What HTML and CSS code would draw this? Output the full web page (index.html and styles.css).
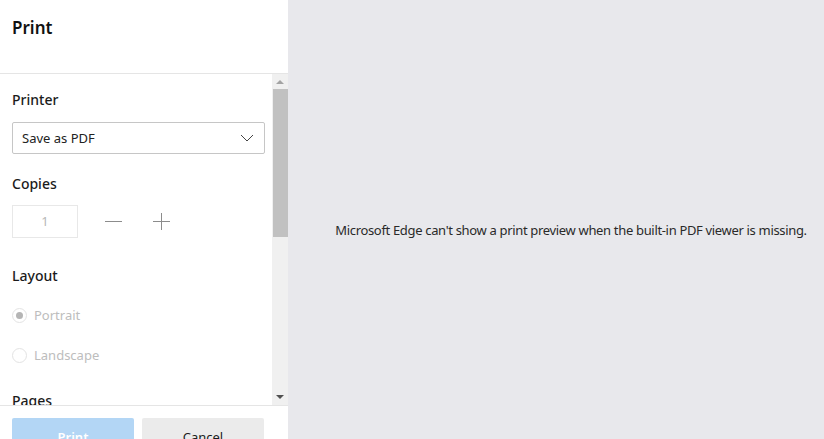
FILE: index.html
```html
<!DOCTYPE html>
<html lang="en">
<head>
    <meta charset="UTF-8">
    <title>Print</title>
    <link rel="stylesheet" href="styles.css">
</head>
<body>
<div class="app">
    <div class="side">
        <div class="head">Print</div>
        <div class="scrollBox">
            <div class="inner">
                <div class="label first">Printer</div>
                <div class="select">
                    <span>Save as PDF</span>
                    <svg width="14" height="8" viewBox="0 0 14 8"><path d="M1 1 L7 7 L13 1" fill="none" stroke="#444" stroke-width="1"/></svg>
                </div>
                <div class="label">Copies</div>
                <div class="copies">
                    <div class="num">1</div>
                    <span class="minus"></span>
                    <span class="plus"></span>
                </div>
                <div class="label layout">Layout</div>
                <div class="radio on"><i></i>Portrait</div>
                <div class="radio"><i></i>Landscape</div>
                <div class="label pages">Pages</div>
            </div>
            <div class="bar">
                <span class="up"></span>
                <span class="thumb"></span>
                <span class="down"></span>
            </div>
        </div>
        <div class="foot">
            <button class="btn print">Print</button>
            <button class="btn cancel">Cancel</button>
        </div>
    </div>
    <div class="preview">
        <p>Microsoft Edge can't show a print preview when the built-in PDF viewer is missing.</p>
    </div>
</div>
</body>
</html>
```

FILE: styles.css
```css
html,body{
    height: 100%;
    overflow: hidden;
}
*{
    margin:0;
    padding:0;
    box-sizing: border-box;
}
body{
    font-family: "Noto Sans", "Open Sans", sans-serif;
    font-size: 13px;
    color: #222;
}
.app{
    display: flex;
    height: 439px;
}
.side{
    width: 288px;
    display: flex;
    flex-direction: column;
    background: #fff;
    overflow: hidden;
}
.head{
    flex-shrink: 0;
    height: 74px;
    border-bottom: 1px solid #e5e5e5;
    padding: 16px 12px 0;
    font-size: 17px;
    font-weight: 600;
    line-height: 24px;
    color: #111;
}
.scrollBox{
    flex-shrink: 0;
    height: 331px;
    display: flex;
    overflow: hidden;
}
.inner{
    flex: 1;
    padding: 0 7px 0 12px;
}
.label{
    font-size: 14px;
    font-weight: 500;
    line-height: 20px;
    margin-top: 20px;
    color: #1b1b1b;
}
.label.first{
    margin-top: 16px;
}
.label.layout{
    margin-top: 28px;
}
.select{
    margin-top: 12px;
    height: 32px;
    width: 253px;
    border: 1px solid #c6c6c6;
    border-radius: 2px;
    display: flex;
    align-items: center;
    justify-content: space-between;
    padding: 0 10px 0 9px;
}
.copies{
    margin-top: 11px;
    display: flex;
    align-items: center;
    height: 33px;
}
.num{
    width: 66px;
    height: 33px;
    border: 1px solid #e8e8e8;
    color: #b8b8b8;
    text-align: center;
    line-height: 31px;
}
.minus,.plus{
    width: 17px;
    height: 17px;
    position: relative;
    margin-left: 27px;
}
.plus{
    margin-left: 31px;
}
.minus:before,.plus:before,.plus:after{
    content: "";
    position: absolute;
    background: #8c8c8c;
}
.minus:before,.plus:before{
    left: 0;
    top: 8px;
    width: 17px;
    height: 1px;
}
.plus:after{
    left: 8px;
    top: 0;
    width: 1px;
    height: 17px;
}
.label.pages{
    margin-top: 26px;
}
.radio{
    display: flex;
    align-items: center;
    height: 20px;
    margin-top: 19px;
    color: #bdbdbd;
}
.radio + .radio{
    margin-top: 20px;
}
.radio i{
    width: 15px;
    height: 15px;
    border: 1px solid #e3e3e3;
    border-radius: 50%;
    margin-right: 7px;
    position: relative;
}
.radio.on i:after{
    content: "";
    position: absolute;
    left: 3px;
    top: 3px;
    width: 7px;
    height: 7px;
    border-radius: 50%;
    background: #b5b5b5;
}
.bar{
    width: 17px;
    background: #f0f0f0;
    display: flex;
    flex-direction: column;
    align-items: center;
}
.up,.down{
    width: 0;
    height: 0;
    border-left: 4px solid transparent;
    border-right: 4px solid transparent;
    margin: 6px 0 5px;
}
.up{
    border-bottom: 4px solid #a3a3a3;
}
.thumb{
    width: 15px;
    height: 148px;
    background: #c1c1c1;
}
.down{
    margin-top: auto;
    margin-bottom: 6px;
    border-top: 4px solid #505050;
}
.foot{
    flex-shrink: 0;
    height: 60px;
    border-top: 1px solid #e5e5e5;
    padding: 12px 24px 0 12px;
    display: flex;
    gap: 8px;
}
.btn{
    width: 122px;
    height: 32px;
    border: none;
    border-radius: 2px;
    font-family: inherit;
    font-size: 13px;
    font-weight: 600;
    padding-top: 6px;
}
.print{
    background: #b3d6f5;
    color: #fff;
}
.cancel{
    background: #ebebeb;
    color: #1b1b1b;
    font-weight: 400;
}
.preview{
    flex: 1;
    background: #e8e8ec;
    display: flex;
    align-items: center;
    justify-content: center;
    padding: 0 0 0 30px;
    color: #2a2a2a;
}
.preview p{
    margin-top: 21px;
    letter-spacing: -0.33px;
}
```
